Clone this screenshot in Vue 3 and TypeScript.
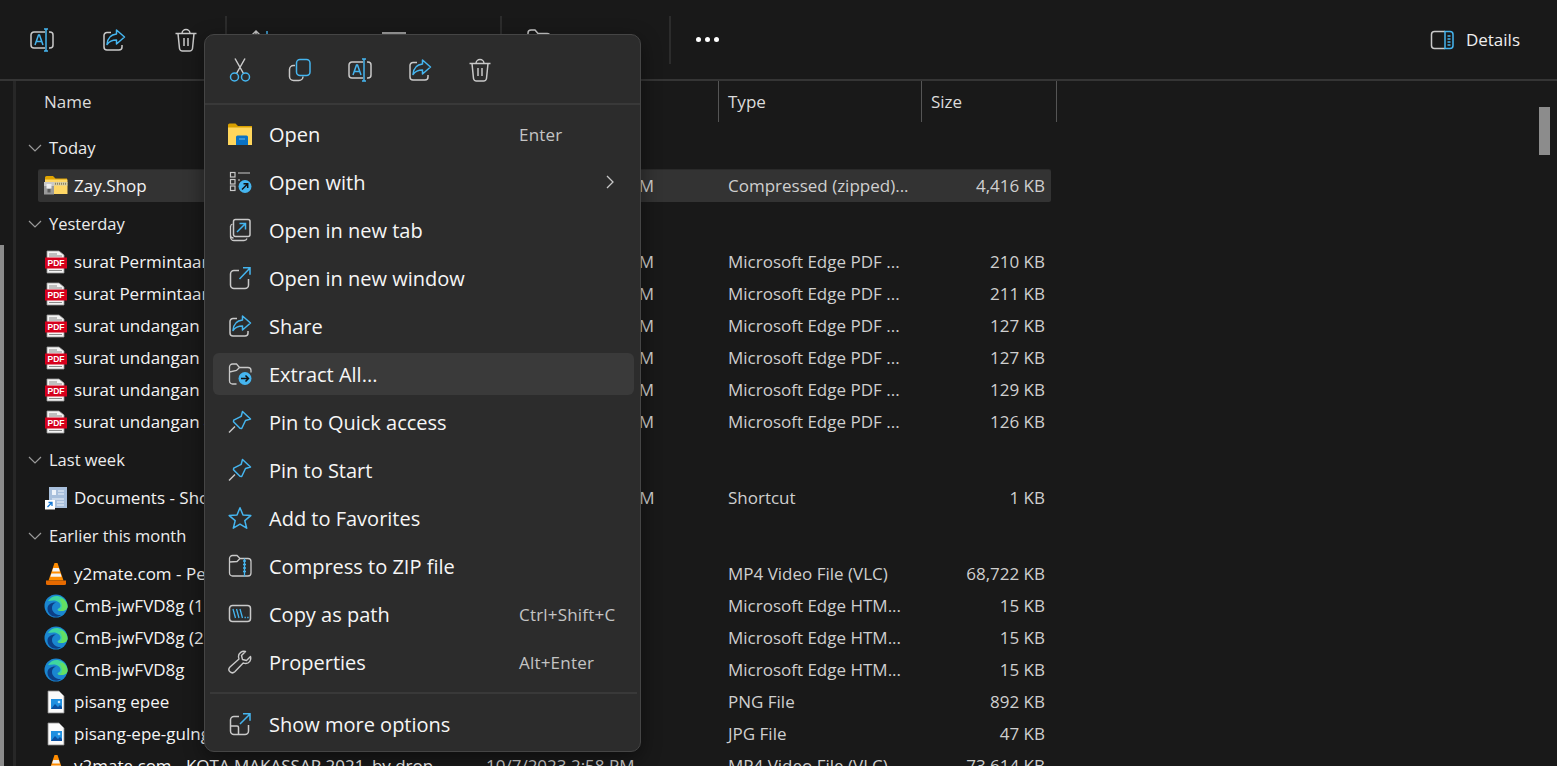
<template>
  <div class="explorer">
    <div class="toolbar">
      <button class="tool"><svg class="ico" viewBox="0 0 24 24" v-html="icons.rename"></svg></button>
      <button class="tool"><svg class="ico" viewBox="0 0 24 24" v-html="icons.share"></svg></button>
      <button class="tool"><svg class="ico" viewBox="0 0 24 24" v-html="icons.trash"></svg></button>
      <span class="sep"></span>
      <button class="tool sort"><svg class="ico" viewBox="0 0 24 24" v-html="icons.sort"></svg><span>Sort</span></button>
      <button class="tool view"><svg class="ico" viewBox="0 0 24 24" v-html="icons.view"></svg><span>View</span></button>
      <span class="sep"></span>
      <button class="tool extract"><svg class="ico" viewBox="0 0 24 24" v-html="icons.extract"></svg><span>Extract all</span></button>
      <span class="sep"></span>
      <button class="tool more"><i></i><i></i><i></i></button>
      <button class="details"><svg class="ico" viewBox="0 0 24 24" v-html="icons.details"></svg><span>Details</span></button>
    </div>

    <div class="body">
      <div class="rail"><div class="rail-thumb"></div></div>

      <div class="list">
        <div class="head">
          <span class="h-name">Name</span>
          <span class="h-date"></span>
          <span class="h-type">Type</span>
          <span class="h-size">Size</span>
        </div>

        <template v-for="g in groups" :key="g.title">
          <div class="group">
            <svg class="chev" viewBox="0 0 14 8"><path d="M1 1l6 6 6-6" fill="none" stroke="#9a9a9a" stroke-width="1.2" /></svg>
            <span>{{ g.title }}</span>
          </div>
          <div v-for="f in g.files" :key="f.name" class="row" :class="{ selected: f.selected }">
            <div class="c-name">
              <svg class="ico" viewBox="0 0 24 24" v-html="icons[f.icon]"></svg>
              <span>{{ f.name }}</span>
            </div>
            <div class="c-date">{{ f.date }}</div>
            <div class="c-type">{{ f.type }}</div>
            <div class="c-size">{{ f.size }}</div>
          </div>
        </template>
      </div>

      <div class="scroll"><div class="scroll-thumb"></div></div>
    </div>

    <div class="menu">
      <div class="quick">
        <button v-for="q in quick" :key="q"><svg class="ico" viewBox="0 0 24 24" v-html="icons[q]"></svg></button>
      </div>
      <div class="line"></div>
      <div class="items">
        <div v-for="m in items" :key="m.label" class="item" :class="{ hover: m.hover }">
          <svg class="ico" viewBox="0 0 24 24" v-html="icons[m.icon]"></svg>
          <span>{{ m.label }}</span>
          <span class="short">
            {{ m.short }}
            <svg v-if="m.sub" class="sub" viewBox="0 0 14 14"><path d="M4 1l6 6-6 6" fill="none" stroke="#c8c8c8" stroke-width="1.3" /></svg>
          </span>
        </div>
      </div>
      <div class="line short-line"></div>
      <div class="items last">
        <div class="item">
          <svg class="ico" viewBox="0 0 24 24" v-html="icons.showMore"></svg>
          <span>Show more options</span>
        </div>
      </div>
    </div>
  </div>
</template>

<script setup lang="ts">
interface FileRow {
  name: string
  date: string
  type: string
  size: string
  icon: string
  selected?: boolean
}

interface MenuItem {
  label: string
  icon: string
  short?: string
  sub?: boolean
  hover?: boolean
}

const G = "#c9c9c9"
const B = "#45b5ef"

const pdf = `<path d="M3 1h12l5 4v18H3z" fill="#f4f4f4" stroke="#9a9a9a" stroke-width=".8"/><path d="M5 4h8M5 6h13M5 20.500h13" stroke="#8a8a8a" stroke-width="1"/><rect x="1" y="7.500" width="22" height="11" fill="#d6001c"/><text x="12" y="16" font-size="8.500" font-weight="700" text-anchor="middle" fill="#fff" font-family="Liberation Sans, sans-serif">PDF</text>`
const edge = `<circle cx="12" cy="12" r="11.500" fill="#1a86d0"/><path d="M4 7c3-5 9-6.500 14-3.500 3.500 2 5.500 5.500 5.500 9 0 3-3 4.500-6 4.500-2 0-4-.5-4-1.500 0-1 3-1 3-4 0-3-4-5-7-5-2 0-4 .2-5.500.5z" fill="#3fd6a0"/><path d="M19 5c3 2 4.500 5 4.500 7.500 0 3-3 4.500-6 4.500-1.500 0-3-.3-3.600-.8 3 .3 4.100-1.200 4.100-4.200 0-2.500-1-5-3-6.500 1.500-.5 3-.8 4-.5z" fill="#63df63"/><path d="M3.500 14.500c0-4 4-6.500 8.500-6-3 1-4 3-4 5.500 0 4 4 7.500 9 7-2 1.500-4 1.800-5 1.800-5 0-8.500-3.800-8.500-8.300z" fill="#0c3f86"/>`
const vlc = `<path d="M10.500 1h3l6 17.500h-15z" fill="#ff8c00"/><path d="M9.200 6h5.600l1.100 3.500H8.100zM7.400 11.500h9.200l1 3.300H6.400z" fill="#f4f4f4"/><path d="M2 18.500h20v3a1.500 1.500 0 0 1-1.500 1.500h-17A1.500 1.500 0 0 1 2 21.500z" fill="#e66a00"/>`
const img = `<path d="M4 1h11l5 5v17H4z" fill="#fafafa" stroke="#8a8a8a" stroke-width=".8"/><rect x="7" y="9" width="11" height="10" fill="#1f8fe0"/><path d="M7 19l4-5 3 3 2-2 2 2v2z" fill="#0b4fa0"/><circle cx="15" cy="12" r="1.300" fill="#bfe6ff"/>`

const icons: Record<string, string> = {
  rename: `<path d="M15 4H4a3 3 0 0 0-3 3v10a3 3 0 0 0 3 3h11M19 4h1a3 3 0 0 1 3 3v10a3 3 0 0 1-3 3h-1" fill="none" stroke="${G}" stroke-width="1.500"/><path d="M14 1h4M14 23h4M16 1v22M5 17l3.500-10h1L13 17M6.300 13.500h5.400" fill="none" stroke="${B}" stroke-width="1.500"/>`,
  share: `<path d="M9 4.500H5a3 3 0 0 0-3 3v11.500a3 3 0 0 0 3 3h12a3 3 0 0 0 3-3v-2" fill="none" stroke="${G}" stroke-width="1.500"/><path d="M14.500 2l8 7-8 7v-4c-4 0-7 1-9.500 4.500.5-6 4-10 9.500-10.500z" fill="none" stroke="${B}" stroke-width="1.500" stroke-linejoin="round"/>`,
  trash: `<path d="M1.500 5.500h21M8 5.500a4 4 0 0 1 8 0M4 5.500l1.500 15a3 3 0 0 0 3 2.500h7a3 3 0 0 0 3-2.500l1.500-15M10 10v8M14 10v8" fill="none" stroke="${G}" stroke-width="1.500"/>`,
  cut: `<path d="M7 .5l8.500 15M17 .5L8.500 15.500" fill="none" stroke="${G}" stroke-width="1.500"/><circle cx="6.500" cy="19" r="4" fill="none" stroke="${B}" stroke-width="1.500"/><circle cx="17.500" cy="19" r="4" fill="none" stroke="${B}" stroke-width="1.500"/>`,
  copy: `<path d="M7 7.500H5.500A4 4 0 0 0 1.500 11.500v7A4 4 0 0 0 5.500 22.500h5.500a4 4 0 0 0 4-4" fill="none" stroke="${G}" stroke-width="1.500"/><rect x="8.500" y="1.500" width="13.500" height="16" rx="3.500" fill="none" stroke="${B}" stroke-width="1.500"/>`,
  folder: `<path d="M0 3a1.500 1.500 0 0 1 1.500-1.500h6L10 4h14v3H0z" fill="#d9a000"/><path d="M0 5.500h24V23H0z" fill="#ffd65c"/><path d="M8 15a1.500 1.500 0 0 1 1.500-1.500h9A1.500 1.500 0 0 1 20 15v8H8z" fill="#0a72c4"/><path d="M11 17h6" stroke="#69b7ee" stroke-width="1"/>`,
  openWith: `<rect x="2.500" y="2.500" width="4.500" height="4.500" fill="none" stroke="${G}" stroke-width="1.200"/><rect x="2.500" y="9.500" width="4.500" height="4.500" fill="none" stroke="${G}" stroke-width="1.200"/><rect x="2.500" y="16" width="4.500" height="4.500" fill="none" stroke="${G}" stroke-width="1.200"/><path d="M10 3h12M10 10h2" stroke="${G}" stroke-width="1.200"/><circle cx="17" cy="16.500" r="6.500" fill="${B}"/><path d="M14 19.500l5.500-5.500M15.500 13.800h4.200V18" fill="none" stroke="#111" stroke-width="1.500"/>`,
  newTab: `<path d="M4.500 6C3 6.500 2.500 7.500 2.500 9v10a3.500 3.500 0 0 0 3.500 3.500h10c1.500 0 2.500-.5 3-2M2.500 8v9a3 3 0 0 0 3 3" fill="none" stroke="${G}" stroke-width="1.300"/><rect x="5.500" y="1.500" width="16.500" height="17" rx="2" fill="none" stroke="${G}" stroke-width="1.500"/><path d="M9 14l8.500-8.500M11.500 5.500h6v6" fill="none" stroke="${B}" stroke-width="1.500"/>`,
  newWindow: `<path d="M11 4.500H6a3.500 3.500 0 0 0-3.500 3.500v11A3.500 3.500 0 0 0 6 22.500h11a3.500 3.500 0 0 0 3.500-3.500v-6" fill="none" stroke="${G}" stroke-width="1.500"/><path d="M11.500 13l10-10.500M15 1.800h7v7" fill="none" stroke="${B}" stroke-width="1.500"/>`,
  extractAll: `<path d="M8.500 22H4.500a3 3 0 0 1-3-3V5a3 3 0 0 1 3-3h4l3 3.500H20a3 3 0 0 1 3 3v2M1.500 10l7-1.500 3-3" fill="none" stroke="${G}" stroke-width="1.300"/><circle cx="17" cy="16.500" r="6.500" fill="${B}"/><path d="M13 16.500h7.500M17.500 13.500l3 3-3 3" fill="none" stroke="#111" stroke-width="1.500"/>`,
  pin: `<path d="M14.500 1.500l8 7.500-5 1.500-3.800 8-1.700-.2-6.500-6.500.2-1.700 7.500-3.800z" fill="none" stroke="${B}" stroke-width="1.500" stroke-linejoin="round"/><path d="M7 16.500L1 22.500" stroke="${G}" stroke-width="1.500"/>`,
  star: `<path d="M12 1.800l3 7.200 7.800.6-6 5 1.900 7.600L12 18.200l-6.700 4 1.900-7.600-6-5L9 9z" fill="none" stroke="${B}" stroke-width="1.500" stroke-linejoin="round"/>`,
  zip: `<path d="M16.500 4.500H20a3 3 0 0 1 3 3V19a3 3 0 0 1-3 3H4.500a3 3 0 0 1-3-3V4.500a3 3 0 0 1 3-3H9l3 3h4.500M1.500 8l7.500-.5 3-3" fill="none" stroke="${G}" stroke-width="1.300"/><path d="M16.500 4.500v18M15 7h3M15 10.500h3M15 14h3M15 17.500h3" stroke="${B}" stroke-width="1.300" fill="none"/>`,
  path: `<rect x="1.500" y="3.500" width="21" height="16" rx="3" fill="none" stroke="${G}" stroke-width="1.500"/><path d="M5 7l2.500 9M8.500 7l2.500 9M12 7l2.500 9" stroke="${B}" stroke-width="1.300" fill="none"/><path d="M16.500 15.500h1.400M19.200 15.500h1.400" stroke="${B}" stroke-width="1.500"/>`,
  wrench: `<path d="M22.500 6.500l-4 4-4-1-1-4 4-4c-3.500-1-7 1.500-7 5 0 1 .2 1.500.5 2.500L2 17a3.200 3.200 0 0 0 4.800 4.800L15.200 13c1 .3 1.500.5 2.500.5 3.500 0 5.800-3.500 4.800-7z" fill="none" stroke="${G}" stroke-width="1.400" stroke-linejoin="round"/>`,
  showMore: `<path d="M11 4.500H6a3.500 3.500 0 0 0-3.500 3.500v11A3.500 3.500 0 0 0 6 22.500h11a3.500 3.500 0 0 0 3.500-3.500v-6M2.500 14h6.500a1.500 1.500 0 0 1 1.500 1.500v7" fill="none" stroke="${G}" stroke-width="1.500"/><path d="M12 12l9.500-9.500M15 1.800h7v7" fill="none" stroke="${B}" stroke-width="1.500"/>`,
  sort: `<path d="M7 3v18M3 7l4-4 4 4" fill="none" stroke="${G}" stroke-width="1.500"/><path d="M18 3v18M14 17l4 4 4-4" fill="none" stroke="${B}" stroke-width="1.500"/>`,
  view: `<path d="M0 5h24M0 13h24M0 21h24" stroke="${G}" stroke-width="1.500"/>`,
  extract: `<path d="M9 22H4a3 3 0 0 1-3-3V5a3 3 0 0 1 3-3h4l3 3.500h9a3 3 0 0 1 3 3v2" fill="none" stroke="${G}" stroke-width="1.500"/><circle cx="17" cy="16.500" r="6.500" fill="${B}"/>`,
  details: `<path d="M15 3.500H4.500a3 3 0 0 0-3 3v11a3 3 0 0 0 3 3H15" fill="none" stroke="${G}" stroke-width="1.500"/><path d="M15 3.500h5a3 3 0 0 1 3 3v11a3 3 0 0 1-3 3h-5zM17.500 8h3M17.500 11h3M17.500 14h3M17.500 17h3" fill="none" stroke="${B}" stroke-width="1.500"/>`,
  zipFile: `<path d="M1 3.500A1.500 1.500 0 0 1 2.500 2H9l2.500 2.500H23v3H1z" fill="#e0a400"/><path d="M1 5.500h22.500V20H1z" fill="#ffd766"/><path d="M9 8h14.500v3.500H9z" fill="#d8cfa8"/><path d="M9 9.700h14.500" stroke="#8e8560" stroke-width="2" stroke-dasharray="1 1"/><path d="M0 8h10v4H0z" fill="#c9c9c9"/><path d="M0 12h10v8.500H0z" fill="#9a9a9a"/><rect x="2.500" y="10" width="5" height="4.500" fill="#eee"/><rect x="3.500" y="15" width="3" height="3.500" fill="#5c5c5c"/>`,
  pdf,
  edge,
  vlc,
  img,
  lnk: `<path d="M5 1h18v21H5z" fill="#a8bfdc"/><path d="M14 5h6M14 8h6M8 13h12M13 16h7M13 19h7" stroke="#eef3fa" stroke-width="1.200"/><rect x="8" y="4" width="4" height="5" fill="#eef3fa"/><rect x="1" y="14" width="10" height="9.500" fill="#fff"/><path d="M3.500 21l4.500-4.500M4.500 16.500H8V20" fill="none" stroke="#1477d4" stroke-width="1.300"/>`,
}

const pdfType = "Microsoft Edge PDF ..."
const htmType = "Microsoft Edge HTM..."

const groups: { title: string; files: FileRow[] }[] = [
  {
    title: "Today",
    files: [
      { name: "Zay.Shop", date: "10/24/2023 10:58 PM", type: "Compressed (zipped)...", size: "4,416 KB", icon: "zipFile", selected: true },
    ],
  },
  {
    title: "Yesterday",
    files: [
      { name: "surat Permintaan Magang", date: "10/23/2023 11:12 PM", type: pdfType, size: "210 KB", icon: "pdf" },
      { name: "surat Permintaan Magang 2", date: "10/23/2023 11:10 PM", type: pdfType, size: "211 KB", icon: "pdf" },
      { name: "surat undangan 1", date: "10/23/2023 10:55 PM", type: pdfType, size: "127 KB", icon: "pdf" },
      { name: "surat undangan 2", date: "10/23/2023 10:54 PM", type: pdfType, size: "127 KB", icon: "pdf" },
      { name: "surat undangan 3", date: "10/23/2023 10:52 PM", type: pdfType, size: "129 KB", icon: "pdf" },
      { name: "surat undangan 4", date: "10/23/2023 10:50 PM", type: pdfType, size: "126 KB", icon: "pdf" },
    ],
  },
  {
    title: "Last week",
    files: [
      { name: "Documents - Shortcut", date: "10/18/2023 11:20 AM", type: "Shortcut", size: "1 KB", icon: "lnk" },
    ],
  },
  {
    title: "Earlier this month",
    files: [
      { name: "y2mate.com - Pesona Makassar", date: "10/8/2023 4:31 PM", type: "MP4 Video File (VLC)", size: "68,722 KB", icon: "vlc" },
      { name: "CmB-jwFVD8g (1)", date: "10/8/2023 1:15 PM", type: htmType, size: "15 KB", icon: "edge" },
      { name: "CmB-jwFVD8g (2)", date: "10/8/2023 1:14 PM", type: htmType, size: "15 KB", icon: "edge" },
      { name: "CmB-jwFVD8g", date: "10/8/2023 1:12 PM", type: htmType, size: "15 KB", icon: "edge" },
      { name: "pisang epee", date: "10/7/2023 3:30 PM", type: "PNG File", size: "892 KB", icon: "img" },
      { name: "pisang-epe-gulng", date: "10/7/2023 3:28 PM", type: "JPG File", size: "47 KB", icon: "img" },
      { name: "y2mate.com - KOTA MAKASSAR 2021_by drop", date: "10/7/2023 2:58 PM", type: "MP4 Video File (VLC)", size: "73,614 KB", icon: "vlc" },
    ],
  },
]

const quick = ["cut", "copy", "rename", "share", "trash"]

const items: MenuItem[] = [
  { label: "Open", icon: "folder", short: "Enter" },
  { label: "Open with", icon: "openWith", sub: true },
  { label: "Open in new tab", icon: "newTab" },
  { label: "Open in new window", icon: "newWindow" },
  { label: "Share", icon: "share" },
  { label: "Extract All...", icon: "extractAll", hover: true },
  { label: "Pin to Quick access", icon: "pin" },
  { label: "Pin to Start", icon: "pin" },
  { label: "Add to Favorites", icon: "star" },
  { label: "Compress to ZIP file", icon: "zip" },
  { label: "Copy as path", icon: "path", short: "Ctrl+Shift+C" },
  { label: "Properties", icon: "wrench", short: "Alt+Enter" },
]
</script>

<style>
html,
body {
  margin: 0;
  background: #191919;
  overflow: hidden;
}
</style>

<style scoped>
.explorer {
  position: relative;
  width: 1557px;
  height: 766px;
  overflow: hidden;
  background: #191919;
  color: #fff;
  font-family: "Open Sans", "Noto Sans", sans-serif;
  font-size: 17px;
  display: flex;
  flex-direction: column;
}

button {
  background: none;
  border: none;
  color: inherit;
  font: inherit;
  padding: 0;
}

.ico {
  width: 24px;
  height: 24px;
  flex: none;
  display: block;
}

.toolbar {
  height: 79px;
  flex: none;
  display: flex;
  align-items: center;
  padding-left: 6px;
  border-bottom: 2px solid #353535;
}

.tool {
  width: 72px;
  height: 48px;
  display: flex;
  align-items: center;
  justify-content: center;
  gap: 4px;
}

.sep {
  width: 2px;
  height: 48px;
  background: #2c2c2c;
  flex: none;
}

.toolbar .sep:nth-of-type(1) {
  margin-left: 3px;
}

.sort {
  width: 132px;
  justify-content: flex-start;
  padding-left: 22px;
}

.view {
  width: 141px;
  justify-content: flex-start;
  padding-left: 23px;
}

.extract {
  width: 167px;
  justify-content: flex-start;
  padding-left: 25px;
}

.more {
  gap: 4px;
}

.more i {
  width: 5px;
  height: 5px;
  border-radius: 50%;
  background: #fff;
}

.details {
  margin-left: auto;
  margin-right: 37px;
  display: flex;
  align-items: center;
  gap: 12px;
  color: #eee;
}

.body {
  flex: 1;
  display: flex;
  min-height: 0;
}

.rail {
  width: 13px;
  border-right: 3px solid #272727;
  flex: none;
  padding-top: 164px;
}

.rail-thumb {
  width: 4px;
  height: 100%;
  background: #8c8c8c;
}

.list {
  flex: 1;
  min-width: 0;
}

.head {
  height: 41px;
  margin-bottom: 4px;
  display: flex;
  color: #dcdcdc;
}

.head span {
  display: flex;
  align-items: center;
  flex: none;
  box-sizing: border-box;
}

.h-name {
  width: 460px;
  padding-left: 28px;
}

.h-date {
  width: 242px;
}

.h-type {
  width: 203px;
  padding-left: 9px;
  border-left: 1px solid #555;
}

.h-size {
  width: 136px;
  padding-left: 9px;
  border-left: 1px solid #555;
  border-right: 1px solid #555;
}

.group {
  height: 44px;
  display: flex;
  align-items: center;
  padding-left: 12px;
  gap: 7px;
  color: #ececec;
  font-size: 16.5px;
}

.group span {
  padding-bottom: 2px;
}

.chev {
  width: 14px;
  height: 8px;
}

.row {
  width: 1013px;
  height: 32px;
  margin-left: 22px;
  display: grid;
  grid-template-columns: 438px 242px 203px 130px;
  align-items: center;
  box-sizing: border-box;
  white-space: nowrap;
}

.row.selected {
  background: #333;
  box-shadow: 0 -1px 0 #2a2a2a;
  border-radius: 2px;
}

.c-name {
  display: flex;
  align-items: center;
  gap: 6px;
  padding-left: 6px;
  color: #f4f4f4;
}

.c-name span,
.c-date,
.c-type,
.c-size {
  padding-bottom: 2px;
}

.c-date,
.c-type {
  padding-left: 10px;
  color: #cfcfcf;
}

.c-size {
  text-align: right;
  padding-right: 6px;
  color: #cfcfcf;
}

.scroll {
  width: 18px;
  flex: none;
  padding-top: 26px;
}

.scroll-thumb {
  width: 11px;
  height: 48px;
  background: #8c8c8c;
}

.menu {
  position: absolute;
  left: 204px;
  top: 34px;
  width: 437px;
  height: 718px;
  box-sizing: border-box;
  background: #2c2c2c;
  border: 1px solid #454545;
  border-radius: 10px;
  box-shadow: 0 6px 20px rgba(0, 0, 0, 0.45);
  font-size: 20px;
  overflow: hidden;
}

.quick {
  height: 68px;
  box-sizing: border-box;
  padding: 2px 0 0 5px;
  display: flex;
}

.quick button {
  width: 60px;
  display: flex;
  align-items: center;
  justify-content: center;
}

.line {
  height: 2px;
  background: #393939;
}

.short-line {
  margin: 0 3px 0 5px;
}

.items {
  padding: 8px 6px 9px 8px;
  display: flex;
  flex-direction: column;
  gap: 6px;
}

.items.last {
  padding-top: 9px;
}

.item {
  height: 42px;
  display: grid;
  grid-template-columns: 24px 233px 1fr;
  column-gap: 17px;
  align-items: center;
  padding: 0 15px;
  border-radius: 6px;
  white-space: nowrap;
  color: #f6f6f6;
}

.item.hover {
  background: #3a3a3a;
}

.short {
  font-size: 17px;
  color: #c4c4c4;
  display: flex;
  position: relative;
  letter-spacing: 0.2px;
}

.sub {
  width: 14px;
  height: 14px;
  position: absolute;
  right: 2px;
  top: -7px;
}
</style>
